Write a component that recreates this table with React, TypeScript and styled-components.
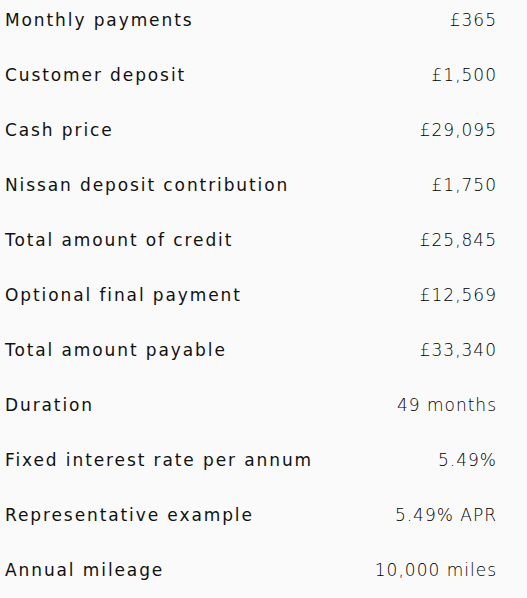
import React from "react";
import styled, { createGlobalStyle } from "styled-components";

const Global = createGlobalStyle`
  html, body { margin: 0; padding: 0; background: #fafafa; }
  body { font-family: "DejaVu Sans", "Noto Sans", sans-serif; color: #111; }
`;

const List = styled.dl`
  margin: 0;
  padding: 9px 30px 0 5px;
  display: flex;
  flex-direction: column;
  gap: 33px;
`;

const Row = styled.div`
  display: flex;
  justify-content: space-between;
  align-items: center;
  height: 22px;
`;

const Label = styled.dt`
  margin: 0;
  font-size: 17px;
  font-weight: 400;
  letter-spacing: 1.9px;
`;

const Value = styled.dd`
  margin: 0;
  font-size: 17px;
  font-weight: 200;
  color: #000;
  letter-spacing: 1px;
`;

const rows: [string, string][] = [
  ["Monthly payments", "£365"],
  ["Customer deposit", "£1,500"],
  ["Cash price", "£29,095"],
  ["Nissan deposit contribution", "£1,750"],
  ["Total amount of credit", "£25,845"],
  ["Optional final payment", "£12,569"],
  ["Total amount payable", "£33,340"],
  ["Duration", "49 months"],
  ["Fixed interest rate per annum", "5.49%"],
  ["Representative example", "5.49% APR"],
  ["Annual mileage", "10,000 miles"],
];

export default function App() {
  return (
    <>
      <Global />
      <List>
        {rows.map(([l, v]) => (
          <Row key={l}>
            <Label>{l}</Label>
            <Value>{v}</Value>
          </Row>
        ))}
      </List>
    </>
  );
}
